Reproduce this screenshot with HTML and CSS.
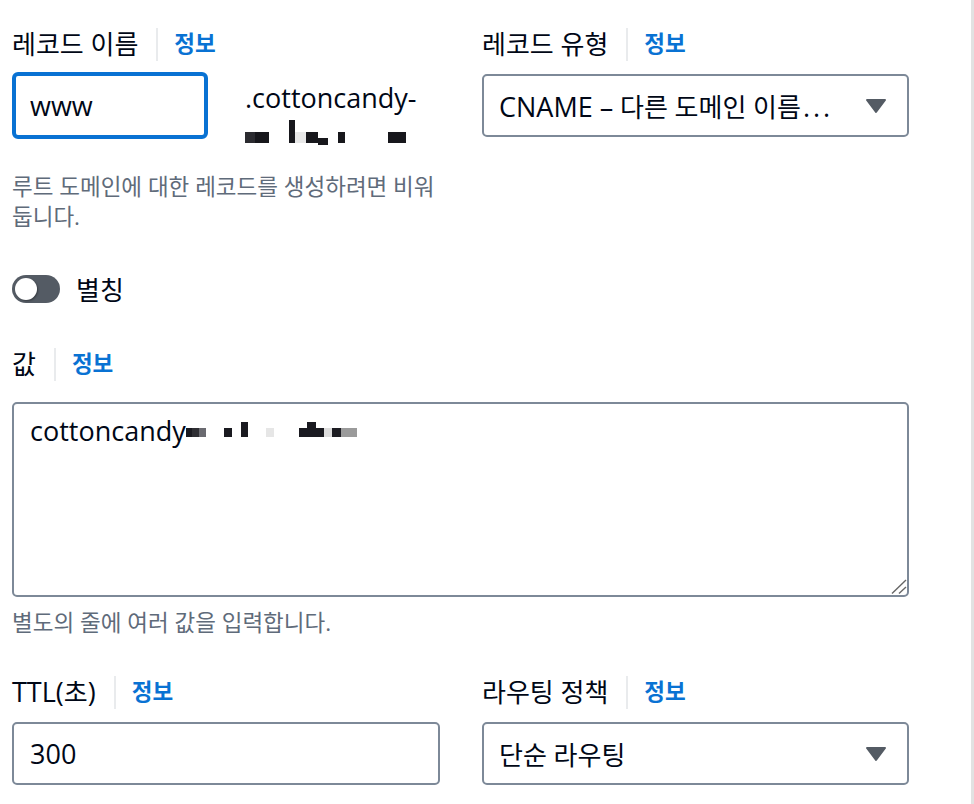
FILE: index.html
```html
<!DOCTYPE html>
<html lang="ko">
<head>
    <meta charset="UTF-8">
    <meta name="viewport" content="width=device-width, initial-scale=1.0">
    <title>레코드 생성</title>
    <link rel="stylesheet" href="styles.css">
</head>
<body>
    <div class="form">
        <div class="grid">
            <div class="field">
                <div class="label-row">
                    <span class="label">레코드 이름</span>
                    <span class="divider"></span>
                    <a href="#" class="info">정보</a>
                </div>
                <div class="name-row">
                    <input class="input input-focus" type="text" value="www">
                    <span class="suffix">.cottoncandy-<br><span class="redact redact-suffix"></span></span>
                </div>
                <p class="hint hint-name">루트 도메인에 대한 레코드를 생성하려면 비워 둡니다.</p>
            </div>
            <div class="field">
                <div class="label-row">
                    <span class="label">레코드 유형</span>
                    <span class="divider"></span>
                    <a href="#" class="info">정보</a>
                </div>
                <div class="select">
                    <span class="select-value"><span class="en">CNAME –</span> 다른 도메인 이름<span class="dots">...</span></span>
                    <svg class="caret" width="22" height="16" viewBox="0 0 22 16">
                        <polygon points="2,2 20,2 11,14" fill="#545b64" stroke="#545b64" stroke-width="2" stroke-linejoin="round"/>
                    </svg>
                </div>
            </div>
        </div>

        <div class="toggle-row">
            <span class="toggle"><span class="knob"></span></span>
            <span class="toggle-label">별칭</span>
        </div>

        <div class="label-row value-label">
            <span class="label">값</span>
            <span class="divider"></span>
            <a href="#" class="info">정보</a>
        </div>
        <div class="textarea">
            cottoncandy<span class="redact redact-value"></span>
            <svg class="resize" width="16" height="16" viewBox="0 0 16 16">
                <line x1="1" y1="14.5" x2="15" y2="1" stroke="#666" stroke-width="1.4"/>
                <line x1="8" y1="14.5" x2="15" y2="8" stroke="#666" stroke-width="1.4"/>
            </svg>
        </div>
        <p class="hint hint-value">별도의 줄에 여러 값을 입력합니다.</p>

        <div class="grid row-bottom">
            <div class="field">
                <div class="label-row">
                    <span class="label"><span class="en">TTL(</span>초<span class="en">)</span></span>
                    <span class="divider"></span>
                    <a href="#" class="info">정보</a>
                </div>
                <input class="input input-ttl" type="text" value="300">
            </div>
            <div class="field">
                <div class="label-row">
                    <span class="label">라우팅 정책</span>
                    <span class="divider"></span>
                    <a href="#" class="info">정보</a>
                </div>
                <div class="select">
                    <span class="select-value">단순 라우팅</span>
                    <svg class="caret" width="22" height="16" viewBox="0 0 22 16">
                        <polygon points="2,2 20,2 11,14" fill="#545b64" stroke="#545b64" stroke-width="2" stroke-linejoin="round"/>
                    </svg>
                </div>
            </div>
        </div>
    </div>
</body>
</html>
```

FILE: styles.css
```css
* {
    margin: 0;
    padding: 0;
    box-sizing: border-box;
}

body {
    font-family: "Open Sans", "Noto Sans CJK KR", sans-serif;
    font-size: 26px;
    color: #000716;
    background: #fff;
    height: 100vh;
    padding: 27px 0 0 12px;
    border-right: 3px solid #e2e2e2;
    overflow: hidden;
}

.form {
    width: 897px;
}

.grid {
    display: grid;
    grid-template-columns: 428px 427px;
    column-gap: 42px;
}

.label-row {
    display: flex;
    align-items: center;
    height: 34px;
    line-height: 34px;
}

.divider {
    width: 2px;
    height: 33px;
    background: #e9ebed;
    margin: 0 16px 0 18px;
}

.info {
    color: #0972d3;
    font-size: 22.5px;
    font-weight: 700;
    text-decoration: none;
}

.en {
    font-size: 27px;
}

/* inputs */
.input {
    display: block;
    height: 63px;
    border: 2px solid #7d8998;
    border-radius: 5px;
    padding: 0 16px;
    font-family: inherit;
    font-size: 27px;
    color: #000716;
    background: #fff;
    outline: none;
}

.input-focus {
    width: 196px;
    height: 67px;
    border: 4px solid #0972d3;
    border-radius: 6px;
    padding: 0 14px;
}

.input-ttl {
    width: 100%;
    margin-top: 13px;
}

.name-row {
    display: flex;
    align-items: flex-start;
    margin-top: 11px;
}

.suffix {
    margin: 7px 0 0 37px;
    font-size: 27px;
    line-height: 38px;
}

.hint {
    font-size: 22.5px;
    line-height: 30px;
    color: #5f6b7a;
    word-break: keep-all;
}

.hint-name {
    margin-top: 17px;
}

.hint-value {
    margin-top: 11px;
}

/* select */
.select {
    margin-top: 13px;
    height: 63px;
    border: 2px solid #7d8998;
    border-radius: 5px;
    display: flex;
    align-items: center;
    justify-content: space-between;
    padding: 0 20px 0 15px;
    white-space: nowrap;
}

.dots {
    font-size: 27px;
    letter-spacing: 3px;
    margin-left: 2px;
}

.caret {
    display: block;
}

/* toggle */
.toggle-row {
    display: flex;
    align-items: center;
    height: 28px;
    margin-top: 43px;
}

.toggle {
    display: flex;
    align-items: center;
    width: 48px;
    height: 28px;
    border-radius: 14px;
    background: #545b64;
    padding-left: 3px;
}

.knob {
    width: 22px;
    height: 22px;
    border-radius: 50%;
    background: #fff;
    box-shadow: 1px 1px 2px rgba(0, 0, 0, 0.35);
}

.toggle-label {
    margin-left: 16px;
}

/* value */
.value-label {
    margin-top: 44px;
}

.textarea {
    position: relative;
    margin-top: 21px;
    height: 195px;
    border: 2px solid #7d8998;
    border-radius: 5px;
    padding: 10px 16px;
    font-size: 27px;
    line-height: 34px;
}

.resize {
    position: absolute;
    right: 0;
    bottom: 0;
}

.row-bottom {
    margin-top: 37px;
}

/* blurred parts of the domain */
.redact {
    display: inline-block;
    background-repeat: no-repeat;
}

.redact-suffix {
    width: 161px;
    height: 25px;
    vertical-align: 1px;
    background-image:
        linear-gradient(#2b2b30 0 0), linear-gradient(#17171c 0 0),
        linear-gradient(#17171c 0 0), linear-gradient(#e8e8e8 0 0),
        linear-gradient(#17171c 0 0), linear-gradient(#17171c 0 0),
        linear-gradient(#17171c 0 0), linear-gradient(#17171c 0 0);
    background-position:
        0 12px, 10px 12px, 44px 0, 50px 12px,
        61px 12px, 73px 18px, 93px 12px, 143px 12px;
    background-size:
        10px 11px, 14px 11px, 6px 23px, 11px 11px,
        12px 11px, 10px 7px, 7px 11px, 18px 11px;
}

.redact-value {
    width: 171px;
    height: 15px;
    vertical-align: 4px;
    background-image:
        linear-gradient(#1a1a20 0 0), linear-gradient(#2e2e33 0 0),
        linear-gradient(#6a6a70 0 0), linear-gradient(#1a1a20 0 0),
        linear-gradient(#1a1a20 0 0), linear-gradient(#e6e6e6 0 0),
        linear-gradient(#1a1a20 0 0), linear-gradient(#1a1a20 0 0),
        linear-gradient(#1a1a20 0 0), linear-gradient(#dcdcdc 0 0),
        linear-gradient(#1c1c22 0 0), linear-gradient(#9a9a9a 0 0);
    background-position:
        0 6px, 6px 6px, 13px 6px, 38px 6px,
        55px 0, 80px 6px, 113px 6px, 121px 0,
        130px 6px, 138px 6px, 146px 6px, 155px 6px;
    background-size:
        6px 9px, 7px 9px, 7px 9px, 8px 9px,
        7px 15px, 8px 9px, 8px 9px, 9px 15px,
        8px 9px, 8px 9px, 9px 9px, 16px 9px;
}
```
